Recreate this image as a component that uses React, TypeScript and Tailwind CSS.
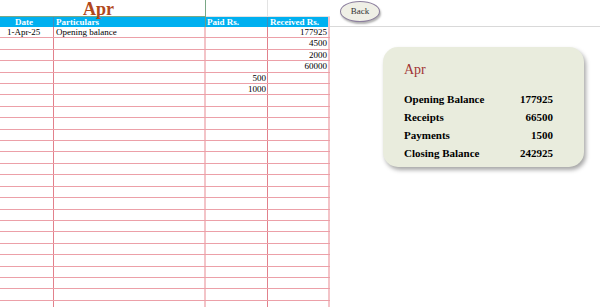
const entries = [
  { date: '1-Apr-25', particulars: 'Opening balance', paid: '', received: '177925' },
  { date: '', particulars: '', paid: '', received: '4500' },
  { date: '', particulars: '', paid: '', received: '2000' },
  { date: '', particulars: '', paid: '', received: '60000' },
  { date: '', particulars: '', paid: '500', received: '' },
  { date: '', particulars: '', paid: '1000', received: '' },
];

const rows = [...entries, ...Array(19).fill({ date: '', particulars: '', paid: '', received: '' })];

const summary = [
  { label: 'Opening Balance', value: '177925' },
  { label: 'Receipts', value: '66500' },
  { label: 'Payments', value: '1500' },
  { label: 'Closing Balance', value: '242925' },
];

export default function App() {
  return (
    <div className="flex h-[307px] w-[600px] overflow-hidden bg-white font-['Liberation_Serif','Times_New_Roman',serif] text-black">
      {/* ledger sheet */}
      <div className="w-[330px] shrink-0">
        <div className="flex h-[17px]">
          <div className="w-[206px] border-r border-b border-[#7aa886] pr-[8px] text-center text-[18px] font-bold leading-[18px] text-[#b2481c]">
            Apr
          </div>
          <div className="w-[62px] border-r border-b border-[#e3e3e3]" />
          <div className="w-[62px] border-b border-[#e3e3e3]" />
        </div>
        <div className="flex h-[10px] bg-[#00b0f0] text-[9px] font-bold leading-[10px] text-white">
          <div className="w-[54px] border-r border-[#3f8fbf] pl-[15px]">Date</div>
          <div className="w-[152px] border-r border-[#6a9f8a] pl-[2px]">Particulars</div>
          <div className="w-[62px] border-r border-[#3f8fbf] pl-[1px]">Paid Rs.</div>
          <div className="w-[62px] border-r-2 border-[#f3c4c8] pl-[2px]">Received Rs.</div>
        </div>
        {rows.map((r, i) => (
          <div key={i} className="flex h-[11.42px] border-b border-[#eca0a8] text-[9px] leading-[11px]">
            <div className="w-[54px] border-r border-[#e2818c] pl-[7px]">{r.date}</div>
            <div className="w-[152px] border-r-2 border-[#f3c4c8] pl-[2px]">{r.particulars}</div>
            <div className="w-[62px] border-r border-[#e2818c] pr-[1px] text-right">{r.paid}</div>
            <div className="w-[62px] border-r-2 border-[#f3c4c8] pr-[1px] text-right">{r.received}</div>
          </div>
        ))}
      </div>

      {/* right side */}
      <div className="flex-1">
        <div className="h-[27px] border-b border-[#d9d9d9] pl-[10px] pt-[1px]">
          <button className="flex h-[21px] w-[40px] items-center justify-center rounded-[50%] border border-[#8c7f9e] bg-[#efefe6] text-[9px] text-[#333] shadow-[1px_2px_2px_rgba(0,0,0,0.3)]">
            Back
          </button>
        </div>
        <div className="ml-[53px] mt-[20px] h-[120px] w-[201px] rounded-[15px] bg-[#e9ecdd] pl-[21px] pr-[31px] pt-[14px] shadow-[2px_3px_4px_rgba(0,0,0,0.35)]">
          <div className="text-[14px] leading-[18px] text-[#a13535]">Apr</div>
          <div className="mt-[11px]">
            {summary.map((s) => (
              <div key={s.label} className="flex h-[18px] items-center justify-between text-[11px] font-bold leading-[18px]">
                <span>{s.label}</span>
                <span>{s.value}</span>
              </div>
            ))}
          </div>
        </div>
      </div>
    </div>
  );
}
